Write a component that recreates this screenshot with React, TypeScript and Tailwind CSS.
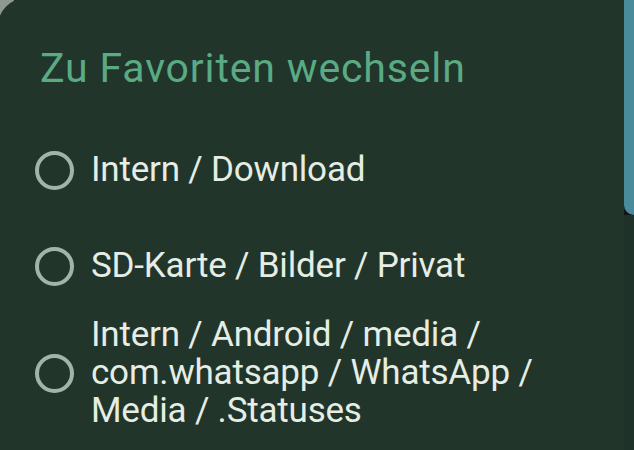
const options = [
  ["Intern / Download"],
  ["SD-Karte / Bilder / Privat"],
  ["Intern / Android / media /", "com.whatsapp / WhatsApp /", "Media / .Statuses"],
]

const Radio = () => (
  <div className="w-[39px] h-[39px] shrink-0 rounded-full border-[4px] border-[#a2b3a8]" />
)

const App = () => {
  return (
    <div
      className="relative w-[634px] h-[450px] overflow-hidden bg-[#121514]"
      style={{ fontFamily: "Roboto, 'Noto Sans', sans-serif" }}
    >
      {/* backdrop bits peeking out behind the dialog */}
      <div className="absolute left-0 top-0 w-[14px] h-[18px] bg-[#8f9893]" />
      <div className="absolute right-0 top-0 w-[10px] h-[215px] rounded-bl-[12px] bg-[#4a8b9b]" />
      <div className="absolute right-0 top-[215px] w-[10px] h-[235px] bg-[#1f3229]" />

      <div className="relative -ml-[3px] -mt-[3px] w-[627px] h-[460px] rounded-tl-[32px] bg-[#21352b] pl-[38px] pt-[47px]">
        <h1 className="ml-[5px] text-[41px] leading-[48px] text-[#5aaa84] tracking-[0.85px]">
          Zu Favoriten wechseln
        </h1>
        <div className="mt-[30px] flex flex-col">
          {options.map((lines, i) => (
            <div
              key={i}
              className={`flex items-center gap-[17px] ${lines.length > 1 ? "py-[2px]" : "min-h-[96px]"}`}
            >
              <Radio />
              <div className="text-[35px] leading-[38px] text-[#e5ede4] tracking-[-0.2px]">
                {lines.map((l) => (
                  <div key={l}>{l}</div>
                ))}
              </div>
            </div>
          ))}
        </div>
      </div>
    </div>
  )
}

export default App
